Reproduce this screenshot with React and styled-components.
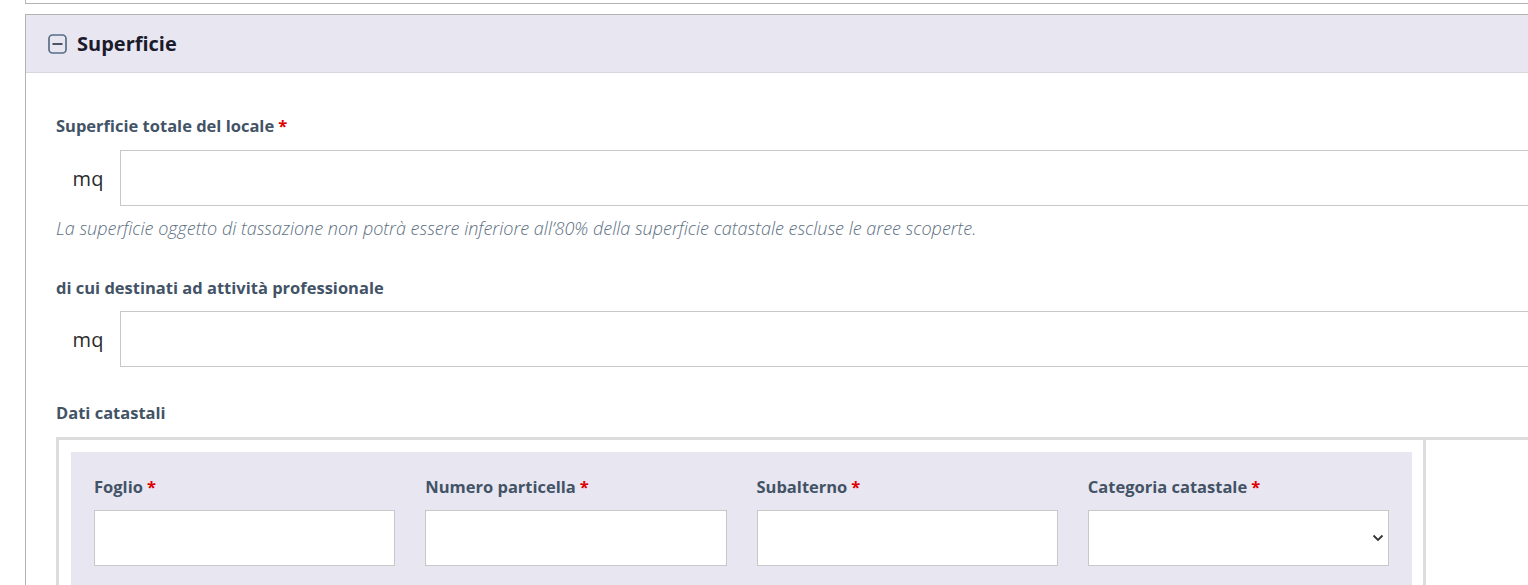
import React from "react";
import styled, { createGlobalStyle } from "styled-components";

const GlobalStyle = createGlobalStyle`
  html, body {
    margin: 0;
    padding: 0;
    background: #ffffff;
    overflow: hidden;
  }
  body {
    font-family: "Open Sans", "Noto Sans", sans-serif;
    color: #19191a;
  }
  * { box-sizing: border-box; }
`;

const Page = styled.div`
  width: 1600px;
  padding-left: 25px;
`;

const TopPanel = styled.div`
  height: 4px;
  border-left: 1px solid #b3b3b3;
  border-bottom: 1px solid #b3b3b3;
`;

const Section = styled.section`
  margin-top: 10px;
  border-top: 1px solid #b3b3b3;
  border-left: 1px solid #b3b3b3;
`;

const Header = styled.div`
  display: flex;
  align-items: center;
  gap: 10px;
  height: 58px;
  padding-left: 22px;
  background: #e8e6f1;
  border-bottom: 1px solid #d6d6dc;
`;

const Title = styled.h2`
  margin: 0;
  font-size: 20px;
  font-weight: 700;
  color: #1b1b2c;
`;

const Body = styled.div`
  padding: 41px 0 0 30px;
`;

const Label = styled.div`
  font-size: 16.5px;
  line-height: 24px;
  font-weight: 700;
  color: #435366;
  margin-top: ${(p) => p.$top || 0}px;
`;

const Required = styled.span`
  color: #e00000;
  margin-left: 4px;
`;

const InputGroup = styled.div`
  display: flex;
  align-items: center;
  margin-top: ${(p) => p.$top || 12}px;
`;

const Prefix = styled.span`
  width: 64px;
  text-align: center;
  font-size: 20px;
  color: #2c2c2c;
`;

const TextInput = styled.input`
  flex: 1;
  height: 56px;
  border: 1px solid #c8c8c8;
  background: #ffffff;
  font-size: 16px;
  padding: 0 12px;
  outline: none;
`;

const Help = styled.p`
  margin: 10px 0 0;
  font-size: 18px;
  line-height: 24px;
  font-style: italic;
  font-weight: 300;
  color: #5c6f82;
`;

const TableRow = styled.div`
  display: flex;
  margin-top: 12px;
  border-top: 3px solid #dcdcdc;
`;

const MainCell = styled.div`
  width: 1370px;
  padding: 12px 11px 0 12px;
  border-left: 3px solid #dcdcdc;
  border-right: 3px solid #dcdcdc;
`;

const SideCell = styled.div`
  flex: 1;
`;

const Cadastral = styled.div`
  display: grid;
  grid-template-columns: repeat(4, 1fr);
  gap: 30px;
  padding: 23px 23px 20px;
  background: #e8e6f1;
`;

const Field = styled.div`
  display: flex;
  flex-direction: column;
  gap: 11px;
`;

const FieldInput = styled.input`
  height: 56px;
  border: 1px solid #c8c8c8;
  background: #ffffff;
  font-size: 16px;
  padding: 0 10px;
  outline: none;
`;

const SelectBox = styled.div`
  position: relative;
  height: 56px;
  border: 1px solid #c8c8c8;
  background: #ffffff;
`;

const Chevron = styled.svg`
  position: absolute;
  right: 4px;
  top: 23px;
`;

const MinusSquare = () => (
  <svg width="19" height="20" viewBox="0 0 19 20">
    <rect x="1" y="1" width="17" height="18" rx="3.5" fill="none" stroke="#5a6e85" strokeWidth="1.7" />
    <line x1="4.5" y1="10" x2="14.5" y2="10" stroke="#2e3a48" strokeWidth="1.7" />
  </svg>
);

const cadastralFields = ["Foglio", "Numero particella", "Subalterno"];

export default function App() {
  return (
    <>
      <GlobalStyle />
      <Page>
        <TopPanel />
        <Section>
          <Header>
            <MinusSquare />
            <Title>Superficie</Title>
          </Header>
          <Body>
            <Label>
              Superficie totale del locale<Required>*</Required>
            </Label>
            <InputGroup>
              <Prefix>mq</Prefix>
              <TextInput />
            </InputGroup>
            <Help>
              La superficie oggetto di tassazione non potrà essere inferiore all’80% della superficie catastale
              escluse le aree scoperte.
            </Help>
            <Label $top={36}>di cui destinati ad attività professionale</Label>
            <InputGroup $top={11}>
              <Prefix>mq</Prefix>
              <TextInput />
            </InputGroup>
            <Label $top={34}>Dati catastali</Label>
            <TableRow>
              <MainCell>
                <Cadastral>
                  {cadastralFields.map((name) => (
                    <Field key={name}>
                      <Label>
                        {name}
                        <Required>*</Required>
                      </Label>
                      <FieldInput />
                    </Field>
                  ))}
                  <Field>
                    <Label>
                      Categoria catastale<Required>*</Required>
                    </Label>
                    <SelectBox>
                      <Chevron width="12" height="8" viewBox="0 0 12 8">
                        <path d="M1.5 1.5 L6 6 L10.5 1.5" fill="none" stroke="#333" strokeWidth="1.8" />
                      </Chevron>
                    </SelectBox>
                  </Field>
                </Cadastral>
              </MainCell>
              <SideCell />
            </TableRow>
          </Body>
        </Section>
      </Page>
    </>
  );
}
